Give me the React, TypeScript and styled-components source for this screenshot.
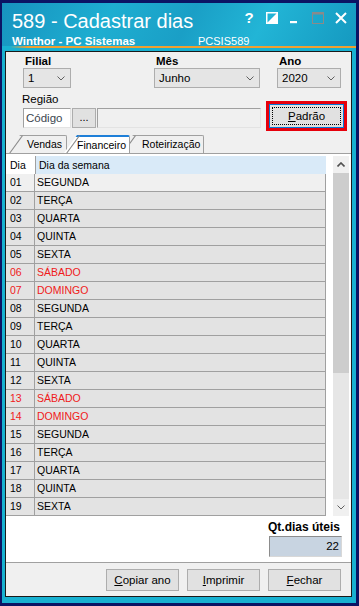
import * as React from "react";
import styled, { createGlobalStyle } from "styled-components";

const GlobalStyle = createGlobalStyle`
  html, body {
    margin: 0;
    padding: 0;
    background: #0b1464;
  }
  body {
    font-family: "Liberation Sans", Arial, sans-serif;
  }
  * {
    box-sizing: border-box;
  }
`;

const Window = styled.div`
  width: 359px;
  height: 606px;
  border: 3px solid #0b1464;
  border-left-width: 2px;
  background: #18b1d1;
  display: flex;
  flex-direction: column;
`;

const TitleBar = styled.div`
  height: 43px;
  padding: 7px 9px 0 10px;
  background: linear-gradient(
    118deg,
    #1793bf 0%,
    #1eaed1 30%,
    #1a9fc6 52%,
    #22b5d6 72%,
    #1599c0 100%
  );
  color: #fff;
  display: flex;
  flex-direction: column;
`;

const TitleRow = styled.div`
  display: flex;
  justify-content: space-between;
  height: 23px;
`;

const Title = styled.div`
  font-size: 20px;
  line-height: 23px;
`;

const Icons = styled.div`
  display: flex;
  gap: 11px;
  margin-top: 2px;
`;

const IconBox = styled.div`
  width: 12px;
  height: 12px;
  display: flex;
  align-items: center;
  justify-content: center;
  font-weight: bold;
  font-size: 15px;
  line-height: 12px;
  color: #fff;
`;

const SubRow = styled.div`
  display: grid;
  grid-template-columns: 186px auto;
  margin-top: 2px;
  line-height: 13px;
`;

const Brand = styled.span`
  font-weight: bold;
  font-size: 11.5px;
`;

const Code = styled.span`
  font-size: 11px;
`;

const OrangeLine = styled.div`
  height: 2px;
  margin-left: 8px;
  background: linear-gradient(90deg, rgba(240, 160, 48, 0) 0, #f0a030 18px);
`;

const Panel = styled.div`
  margin: 3px 4px 6px 3px;
  height: 546px;
  border: 1px solid #1a1a1a;
  background: #f0f0f0;
  display: flex;
  flex-direction: column;
  padding-top: 3px;
  font-size: 11px;
  color: #000;
`;

const TopRow = styled.div`
  display: flex;
  padding-left: 17px;
`;

const Field = styled.div<{ $w: number; $ml?: number }>`
  width: ${(p) => p.$w}px;
  margin-left: ${(p) => p.$ml ?? 0}px;
  display: flex;
  flex-direction: column;
`;

const Label = styled.div<{ $bold?: boolean }>`
  font-weight: ${(p) => (p.$bold ? "bold" : "normal")};
  font-size: 11.5px;
  line-height: 13px;
  padding-left: ${(p) => (p.$bold ? 2 : 0)}px;
`;

const Select = styled.div`
  height: 20px;
  border: 1px solid #adadad;
  background: #e5e5e5;
  display: flex;
  align-items: center;
  justify-content: space-between;
  padding: 0 5px 0 4px;
  font-size: 11.5px;
`;

const SecondRow = styled.div`
  display: flex;
  margin-top: 5px;
  padding-left: 16px;
  height: 38px;
`;

const InputGroup = styled.div`
  display: flex;
  flex-direction: column;
  gap: 2px;
`;

const InputRow = styled.div`
  display: flex;
  gap: 1px;
  padding-left: 1px;
`;

const TextBox = styled.div<{ $w: number; $disabled?: boolean }>`
  width: ${(p) => p.$w}px;
  height: 20px;
  border: 1px solid #a0a0a0;
  border-right-color: #e3e3e3;
  border-bottom-color: #e3e3e3;
  background: ${(p) => (p.$disabled ? "#f0f0f0" : "#fff")};
  color: #3c4650;
  font-size: 11.5px;
  line-height: 18px;
  padding-left: 2px;
`;

const SmallButton = styled.div`
  width: 24px;
  height: 20px;
  border: 1px solid #adadad;
  background: #e1e1e1;
  text-align: center;
  line-height: 16px;
  font-size: 11px;
`;

const Highlight = styled.div`
  margin-left: auto;
  margin-right: 4px;
  margin-top: 8px;
  width: 81px;
  height: 30px;
  border: 3px solid #e6000c;
  background: #e1e1e1;
  display: flex;
`;

const FocusButton = styled.div`
  flex: 1;
  border: 1px solid #0078d7;
  padding: 2px;
  display: flex;
`;

const FocusInner = styled.div`
  flex: 1;
  border: 1px dotted #000;
  display: flex;
  align-items: center;
  justify-content: center;
  font-size: 11.5px;
`;

const TabStrip = styled.div`
  margin-top: 4px;
  height: 18px;
  display: flex;
  align-items: flex-end;
  padding-left: 1px;
`;

const Tab = styled.div<{ $w: number; $pl: number; $ml?: number; $active?: boolean }>`
  position: relative;
  width: ${(p) => p.$w}px;
  margin-left: ${(p) => p.$ml ?? 0}px;
  height: 18px;
  padding-left: ${(p) => p.$pl}px;
  line-height: 17px;
  font-size: 10.5px;
  white-space: nowrap;
  z-index: ${(p) => (p.$active ? 2 : 1)};
  background: ${(p) => (p.$active ? "#fff" : "#f0f0f0")};
  border-top: ${(p) => (p.$active ? "2px solid #1e7fd8" : "1px solid #a0a0a0")};
  border-right: 1px solid #a0a0a0;
  border-top-right-radius: 2px;
  clip-path: polygon(0 100%, 13px 0, 100% 0, 100% 100%);

  &::before {
    content: "";
    position: absolute;
    left: -2px;
    bottom: 8px;
    width: 22px;
    height: 1px;
    background: #8a8a8a;
    transform: rotate(-54deg);
  }
`;

const Content = styled.div`
  height: 409px;
  background: #fff;
  border-top: 1px solid #a0a0a0;
  display: flex;
  flex-direction: column;
  padding-top: 2px;
`;

const GridArea = styled.div`
  display: flex;
  height: 360px;
`;

const Table = styled.div`
  width: 320px;
  display: flex;
  flex-direction: column;
  font-size: 10.5px;
`;

const Row = styled.div<{ $bg: string }>`
  display: grid;
  grid-template-columns: 29px 1fr;
  height: 18px;
  background: ${(p) => p.$bg};
  border-bottom: 1px solid #a0a0a0;
  border-right: 1px solid #a0a0a0;
`;

const HeaderRow = styled.div`
  display: grid;
  grid-template-columns: 29px 1fr;
  height: 18px;
  line-height: 18px;
`;

const HeaderCell = styled.div<{ $blue?: boolean }>`
  background: ${(p) => (p.$blue ? "#d9eaf8" : "#fff")};
  padding-left: ${(p) => (p.$blue ? 3 : 4)}px;
  border-left: ${(p) => (p.$blue ? "1px solid #a0a0a0" : "none")};
`;

const Cell = styled.div<{ $red?: boolean; $first?: boolean }>`
  color: ${(p) => (p.$red ? "#f01a1a" : "#000")};
  padding-left: ${(p) => (p.$first ? 4 : 2)}px;
  line-height: 17px;
  border-right: ${(p) => (p.$first ? "1px solid #a0a0a0" : "none")};
`;

const ScrollBar = styled.div`
  width: 16px;
  margin-left: 7px;
  display: flex;
  flex-direction: column;
  background: #e6e6e6;
`;

const ScrollArrow = styled.div`
  height: 17px;
  background: #f0f0f0;
  display: flex;
  align-items: center;
  justify-content: center;
`;

const ScrollThumb = styled.div`
  height: 200px;
  background: #cdcdcd;
`;

const ScrollTrack = styled.div`
  flex: 1;
`;

const QtArea = styled.div`
  height: 46px;
  display: flex;
  flex-direction: column;
  align-items: flex-end;
  padding: 5px 9px 0 0;
  gap: 2px;
`;

const QtLabel = styled.div`
  font-weight: bold;
  font-size: 12px;
  line-height: 13px;
  margin-right: 2px;
`;

const QtInput = styled.div`
  width: 73px;
  height: 21px;
  border: 1px solid #8c8c8c;
  border-right-color: #d8d8d8;
  border-bottom-color: #d8d8d8;
  background: #c8d4e1;
  text-align: right;
  padding-right: 2px;
  line-height: 19px;
  font-size: 11.5px;
`;

const BottomBar = styled.div`
  height: 34px;
  border-top: 1px solid #a0a0a0;
  display: flex;
  justify-content: flex-end;
  gap: 8px;
  padding: 6px 10px 0 0;
`;

const Button = styled.div`
  width: 73px;
  height: 22px;
  border: 1px solid #adadad;
  background: #e1e1e1;
  display: flex;
  align-items: center;
  justify-content: center;
  font-size: 11.5px;
`;

const Chevron = ({ up }: { up?: boolean }) => (
  <svg width="8" height="5" viewBox="0 0 8 5">
    <polyline
      points={up ? "0.5,4.5 4,1 7.5,4.5" : "0.5,0.5 4,4 7.5,0.5"}
      fill="none"
      stroke={up ? "#505050" : "#606060"}
      strokeWidth={up ? 1.6 : 1}
    />
  </svg>
);

const weekdays = ["SEGUNDA", "TERÇA", "QUARTA", "QUINTA", "SEXTA", "SÁBADO", "DOMINGO"];

const rows = Array.from({ length: 19 }, (_, i) => ({
  dia: String(i + 1).padStart(2, "0"),
  nome: weekdays[i % 7],
  weekend: i % 7 >= 5,
}));

const App = () => {
  return (
    <>
      <GlobalStyle />
      <Window>
        <TitleBar>
          <TitleRow>
            <Title>589 - Cadastrar dias</Title>
            <Icons>
              <IconBox>?</IconBox>
              <IconBox>
                <svg width="12" height="12" viewBox="0 0 12 12">
                  <rect x="0.75" y="0.75" width="10.5" height="10.5" fill="none" stroke="#fff" strokeWidth="1.5" />
                  <polygon points="11,1 11,11 1,11" fill="#fff" />
                </svg>
              </IconBox>
              <IconBox>
                <svg width="12" height="12" viewBox="0 0 12 12">
                  <rect x="1" y="9" width="7" height="2.2" fill="#fff" />
                </svg>
              </IconBox>
              <IconBox>
                <svg width="12" height="12" viewBox="0 0 12 12">
                  <rect x="0.5" y="0.5" width="11" height="11" fill="none" stroke="#8a8a8a" strokeWidth="1" />
                  <rect x="0.5" y="0.5" width="11" height="2" fill="#8a8a8a" />
                </svg>
              </IconBox>
              <IconBox>
                <svg width="12" height="12" viewBox="0 0 12 12">
                  <path d="M1 1 L11 11 M11 1 L1 11" stroke="#fff" strokeWidth="2" />
                </svg>
              </IconBox>
            </Icons>
          </TitleRow>
          <SubRow>
            <Brand>Winthor - PC Sistemas</Brand>
            <Code>PCSIS589</Code>
          </SubRow>
        </TitleBar>
        <OrangeLine />
        <Panel>
          <TopRow>
            <Field $w={48}>
              <Label $bold>Filial</Label>
              <Select>
                <span>1</span>
                <Chevron />
              </Select>
            </Field>
            <Field $w={106} $ml={83}>
              <Label $bold>Mês</Label>
              <Select>
                <span>Junho</span>
                <Chevron />
              </Select>
            </Field>
            <Field $w={64} $ml={17}>
              <Label $bold>Ano</Label>
              <Select>
                <span>2020</span>
                <Chevron />
              </Select>
            </Field>
          </TopRow>
          <SecondRow>
            <InputGroup>
              <Label>Região</Label>
              <InputRow>
                <TextBox $w={48}>Código</TextBox>
                <SmallButton>...</SmallButton>
                <TextBox $w={164} $disabled />
              </InputRow>
            </InputGroup>
            <Highlight>
              <FocusButton>
                <FocusInner>
                  <span>
                    <u>P</u>adrão
                  </span>
                </FocusInner>
              </FocusButton>
            </Highlight>
          </SecondRow>
          <TabStrip>
            <Tab $w={60} $pl={20}>Vendas</Tab>
            <Tab $w={66} $pl={13} $ml={-3} $active>
              Financeiro
            </Tab>
            <Tab $w={84} $pl={22} $ml={-10}>
              Roteirização
            </Tab>
          </TabStrip>
          <Content>
            <GridArea>
              <Table>
                <HeaderRow>
                  <HeaderCell>Dia</HeaderCell>
                  <HeaderCell $blue>Dia da semana</HeaderCell>
                </HeaderRow>
                {rows.map((r, i) => (
                  <Row key={r.dia} $bg={i === 0 ? "#f0f0f0" : "#e3e3e3"}>
                    <Cell $first $red={r.weekend}>
                      {r.dia}
                    </Cell>
                    <Cell $red={r.weekend}>{r.nome}</Cell>
                  </Row>
                ))}
              </Table>
              <ScrollBar>
                <ScrollArrow>
                  <Chevron up />
                </ScrollArrow>
                <ScrollThumb />
                <ScrollTrack />
                <ScrollArrow>
                  <Chevron />
                </ScrollArrow>
              </ScrollBar>
            </GridArea>
            <QtArea>
              <QtLabel>Qt.dias úteis</QtLabel>
              <QtInput>22</QtInput>
            </QtArea>
          </Content>
          <BottomBar>
            <Button>
              <span>
                <u>C</u>opiar ano
              </span>
            </Button>
            <Button>
              <span>
                <u>I</u>mprimir
              </span>
            </Button>
            <Button>
              <span>
                <u>F</u>echar
              </span>
            </Button>
          </BottomBar>
        </Panel>
      </Window>
    </>
  );
};

export default App;
